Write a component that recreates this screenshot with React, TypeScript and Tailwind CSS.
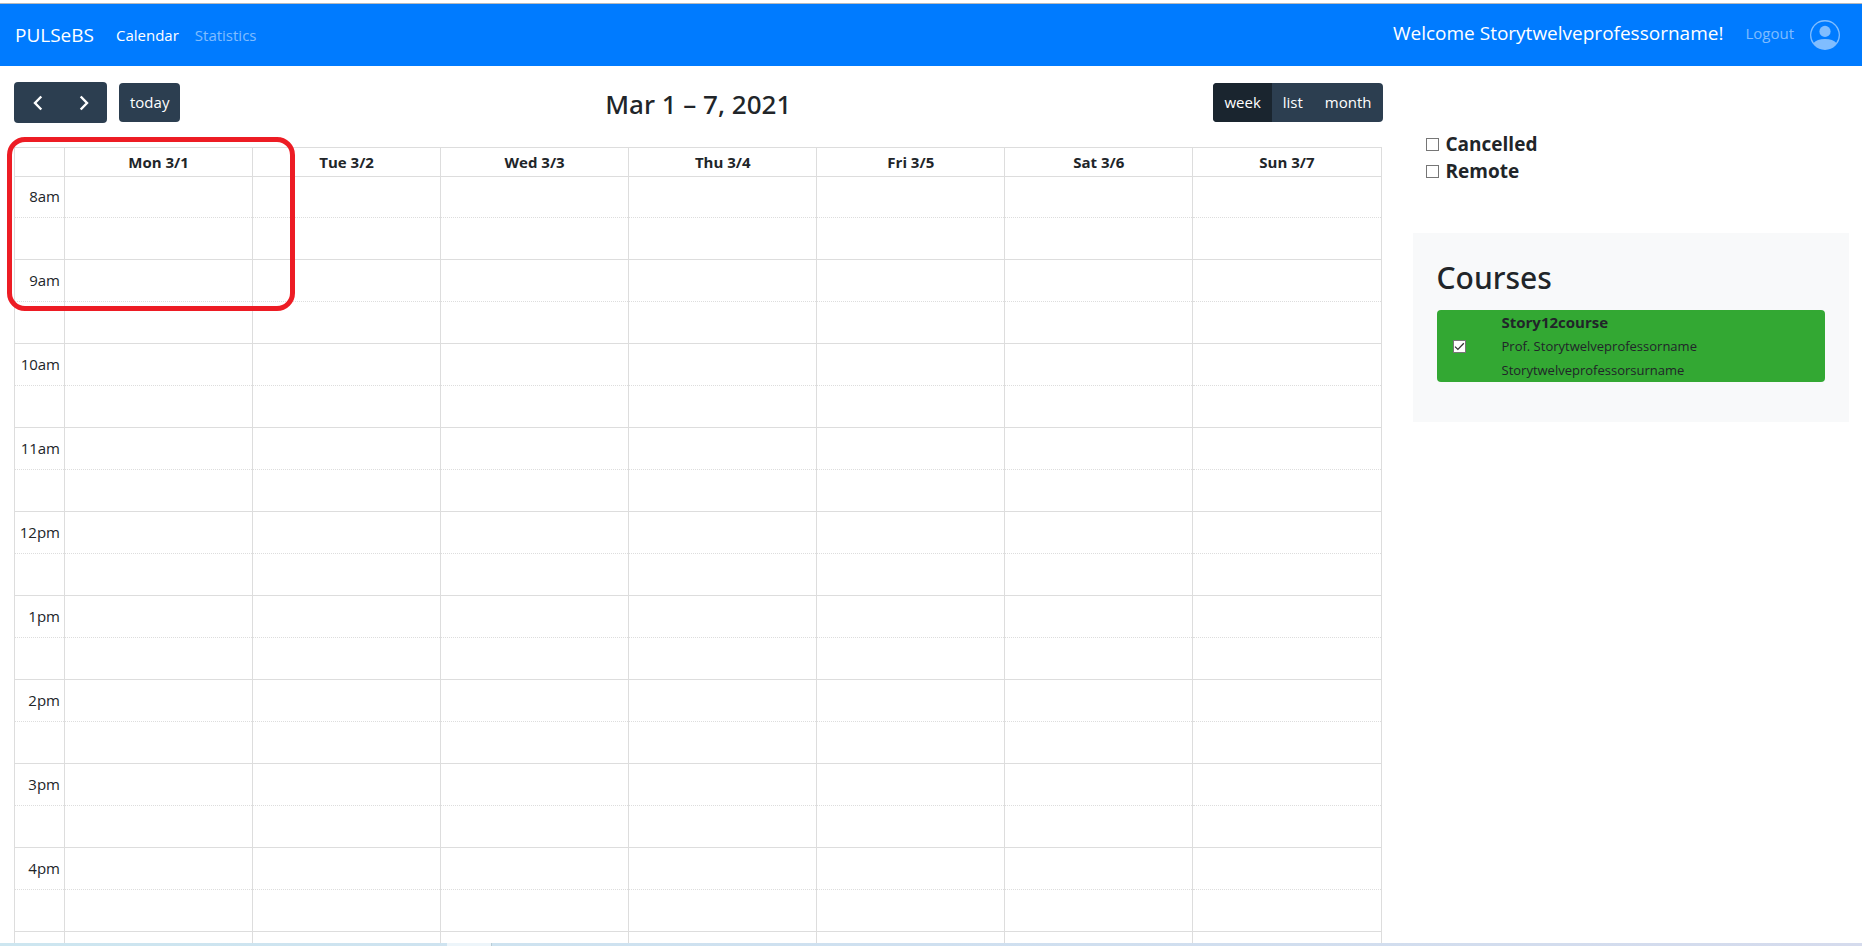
import { useState } from "react";

const days = ["Mon 3/1", "Tue 3/2", "Wed 3/3", "Thu 3/4", "Fri 3/5", "Sat 3/6", "Sun 3/7"];
const hours = ["8am", "9am", "10am", "11am", "12pm", "1pm", "2pm", "3pm", "4pm"];
const views = ["week", "list", "month"];

function Checkbox({ id, defaultChecked = false }: { id: string; defaultChecked?: boolean }) {
  return (
    <span className="grid size-[13px] shrink-0">
      <input
        id={id}
        type="checkbox"
        defaultChecked={defaultChecked}
        className="peer col-start-1 row-start-1 size-[13px] appearance-none border border-[#767676] bg-white"
      />
      <svg
        viewBox="0 0 13 13"
        className="pointer-events-none invisible col-start-1 row-start-1 size-[13px] peer-checked:visible"
        fill="none"
        stroke="#333"
        strokeWidth="1.3"
        aria-hidden="true"
      >
        <path d="M2 6.6 4.9 9.4 10.8 3.3" />
      </svg>
    </span>
  );
}

function Navbar() {
  return (
    <header className="flex h-[62px] shrink-0 items-center bg-[#007bff] px-[15px]">
      <a href="#" className="text-[19px] text-white">
        PULSeBS
      </a>
      <nav className="ml-[22px] flex gap-4 text-[15px]">
        <a href="#calendar" className="text-white">
          Calendar
        </a>
        <a href="#statistics" className="text-white/50">
          Statistics
        </a>
      </nav>
      <div className="ml-auto flex items-center pr-[7px]">
        <span className="pb-1 text-[19px] text-white">Welcome Storytwelveprofessorname!</span>
        <a href="#logout" className="ml-[22px] pb-1 text-[15px] text-white/50">
          Logout
        </a>
        <a href="#profile" aria-label="Profile" className="ml-4 text-white/50">
          <svg viewBox="0 0 30 30" className="size-[30px]" aria-hidden="true">
            <path
              fill="currentColor"
              fillRule="evenodd"
              d="M15 0a15 15 0 1 0 0 30A15 15 0 0 0 15 0Zm0 1.400A13.600 13.600 0 0 1 26.200 22.700C24.200 20.200 20.500 18.900 15 18.900S5.800 20.200 3.800 22.700A13.600 13.600 0 0 1 15 1.400Z"
            />
            <circle cx="15" cy="11.400" r="5.600" fill="currentColor" />
          </svg>
        </a>
      </div>
    </header>
  );
}

function Toolbar() {
  const [view, setView] = useState("week");
  return (
    <div className="flex h-[41px] items-center justify-between text-[15px] text-white">
      <div className="flex flex-1 items-center gap-3">
        <div className="flex h-[41px] rounded bg-[#2c3e50]">
          <button type="button" aria-label="Previous" className="flex w-[47px] items-center justify-center">
            <svg width="10" height="16" viewBox="0 0 10 16" fill="none" stroke="currentColor" strokeWidth="2.4" aria-hidden="true">
              <path d="M8.300 1.500 2 8l6.300 6.500" />
            </svg>
          </button>
          <button type="button" aria-label="Next" className="flex w-[46px] items-center justify-center">
            <svg width="10" height="16" viewBox="0 0 10 16" fill="none" stroke="currentColor" strokeWidth="2.4" aria-hidden="true">
              <path d="M1.700 1.500 8 8l-6.300 6.500" />
            </svg>
          </button>
        </div>
        <button type="button" className="h-[39px] rounded bg-[#2c3e50] px-[11px]">
          today
        </button>
      </div>
      <h2 className="pt-1 font-['Noto_Sans','Open_Sans',sans-serif] text-[26px] font-medium text-[#212529]">
        Mar 1 – 7, 2021
      </h2>
      <div className="flex flex-1 justify-end">
        <div className="flex h-[39px] overflow-hidden rounded bg-[#2c3e50]">
          {views.map((v) => (
            <button
              key={v}
              type="button"
              aria-pressed={v === view}
              onClick={() => setView(v)}
              className="px-[11px] aria-pressed:bg-[#1a252f]"
            >
              {v}
            </button>
          ))}
        </div>
      </div>
    </div>
  );
}

function WeekGrid() {
  return (
    <table className="w-full table-fixed border-collapse border border-[#ddd] text-[15px] leading-6 text-[#212529]">
      <colgroup>
        <col className="w-[50px]" />
        {days.map((d) => (
          <col key={d} />
        ))}
      </colgroup>
      <thead>
        <tr className="h-[29px]">
          <th className="border border-[#ddd] p-0" />
          {days.map((d) => (
            <th key={d} scope="col" className="border border-[#ddd] p-0 font-bold">
              {d}
            </th>
          ))}
        </tr>
      </thead>
      {hours.map((h) => (
        <tbody key={h} className="group">
          <tr className="h-[42px] group-first-of-type:h-[41px]">
            <th scope="row" className="border-x border-t border-[#ddd] p-0 pr-1 pb-[2px] text-right font-normal">
              {h}
            </th>
            {days.map((d) => (
              <td key={d} className="border-x border-t border-[#ddd] p-0" />
            ))}
          </tr>
          <tr className="h-[42px]">
            <td className="border-x border-t border-[#ddd] p-0 [border-top-style:dotted]" />
            {days.map((d) => (
              <td key={d} className="border-x border-t border-[#ddd] p-0 [border-top-style:dotted]" />
            ))}
          </tr>
        </tbody>
      ))}
      <tfoot>
        <tr className="h-[42px]">
          <td className="border border-[#ddd] p-0" />
          {days.map((d) => (
            <td key={d} className="border border-[#ddd] p-0" />
          ))}
        </tr>
      </tfoot>
    </table>
  );
}

function Sidebar() {
  return (
    <aside className="pt-[65px] pr-[13px] pl-4 text-[#212529]">
      <div className="flex flex-col pl-[13px] text-[19px] leading-[27px] font-bold">
        <label className="flex items-center gap-[7px]" htmlFor="cancelled">
          <Checkbox id="cancelled" />
          Cancelled
        </label>
        <label className="flex items-center gap-[7px]" htmlFor="remote">
          <Checkbox id="remote" />
          Remote
        </label>
      </div>
      <section className="mt-12 bg-[#f8f9fa] px-6 pt-6 pb-10">
        <h2 className="font-['Noto_Sans','Open_Sans',sans-serif] text-[30px] leading-[42px] font-medium">Courses</h2>
        <label htmlFor="course" className="mt-[11px] flex items-center gap-9 rounded bg-[#33a833] pl-4">
          <Checkbox id="course" defaultChecked />
          <span className="flex flex-col text-[13px] leading-6">
            <span className="text-[15px] font-bold">Story12course</span>
            <span>Prof. Storytwelveprofessorname</span>
            <span>Storytwelveprofessorsurname</span>
          </span>
        </label>
      </section>
    </aside>
  );
}

export default function App() {
  return (
    <div className="flex h-screen flex-col overflow-hidden bg-white pt-[3px] font-['Open_Sans','Noto_Sans',sans-serif]">
      <div className="h-px shrink-0 bg-[#b5b9be]" />
      <Navbar />
      <main className="grid min-h-0 flex-1 grid-cols-[3fr_1fr] overflow-hidden">
        <div className="px-[14px] pt-4">
          <Toolbar />
          <div className="relative mt-6 pr-px">
            <WeekGrid />
            <div className="pointer-events-none absolute -top-[10px] -left-[7px] h-[174px] w-[288px] rounded-[18px] border-[5px] border-[#ed1c24]" />
          </div>
        </div>
        <Sidebar />
      </main>
      <div className="flex h-[3px] shrink-0 bg-linear-to-r from-[#cde6f0] via-[#cfe0f0] to-[#d5dbed]">
        <div className="ml-[24%] w-11 bg-[#edf5fa]" />
        <div className="w-px bg-[#b9cdd6]" />
      </div>
    </div>
  );
}
